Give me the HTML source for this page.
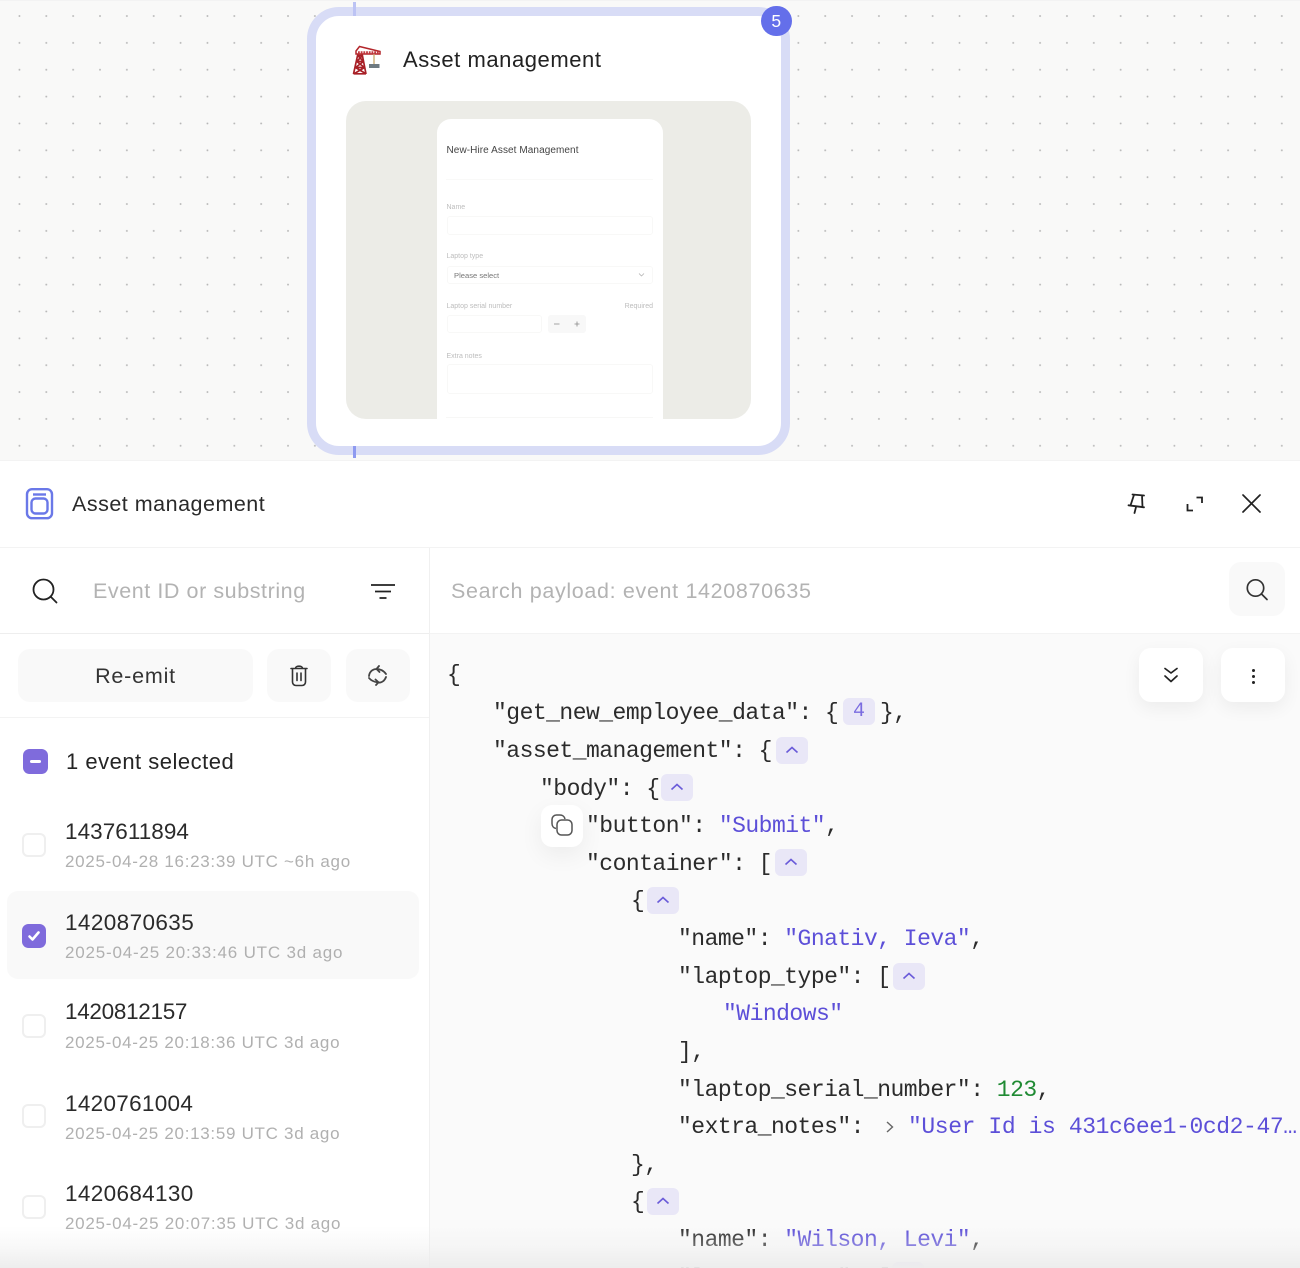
<!DOCTYPE html>
<html><head><meta charset="utf-8"><style>
html,body{margin:0;padding:0;width:1300px;height:1268px;overflow:hidden;background:#fff}
*{box-sizing:border-box}
.a{position:absolute}
#p{position:relative;width:1300px;height:1268px;overflow:hidden;font-family:"Liberation Sans",sans-serif;color:#222}
.t{position:absolute;white-space:nowrap}
.m{position:absolute;white-space:pre;font-family:"Liberation Mono",monospace;font-size:23px;letter-spacing:-.52px;line-height:30px;color:#2b2b2b;margin-top:.5px}
.s{color:#5c4fd8}.n{color:#1f8a33}
.pill{position:absolute;width:32px;height:27px;border-radius:6px;background:#e9e7f7}
.pill svg{position:absolute;left:8px;top:7px}
.lab{position:absolute;white-space:nowrap;font-size:7px;line-height:8px;color:#bdbdbd;margin-top:1.5px}
.inp{position:absolute;border:1px solid #f8f8f7;border-radius:3px}
.id{position:absolute;left:65px;white-space:nowrap;font-size:22.5px;line-height:28px;color:#2a2a2a;letter-spacing:.3px}
.sub{position:absolute;left:65px;white-space:nowrap;font-size:17px;line-height:22px;color:#b0b0b0;letter-spacing:.7px}
.cb{position:absolute;left:22px;width:24px;height:24px;border:2px solid #efefef;border-radius:6px;background:#fff}
.btn{position:absolute;background:#f9f9f9;border-radius:12px}
.fl{position:absolute;background:#fff;border-radius:12px;box-shadow:0 6px 18px rgba(0,0,0,.06)}
</style></head><body><div id="p">

<!-- canvas -->
<div class="a" style="left:0;top:0;width:1300px;height:460px;background-color:#f9f9f8;background-image:radial-gradient(circle,#b4b4b4 0,#b4b4b4 .6px,transparent 1.2px);background-size:26.87px 26.87px;background-position:6px 2.6px"></div>
<div class="a" style="left:0;top:0;width:1300px;height:1px;background:#f3f3f3"></div>

<div class="a" style="left:306.5px;top:7px;width:483.5px;height:448px;border:9.5px solid #d8dcf6;border-radius:32px;background:#fff"></div>
<div class="a" style="left:353px;top:2px;width:3px;height:14px;background:#bcc3f4"></div>
<div class="a" style="left:353px;top:446px;width:3px;height:12px;background:#8e9af0"></div>
<div class="a" style="left:761px;top:5.5px;width:30.5px;height:30.5px;border-radius:50%;background:#646fea;color:#fff;font-size:17.5px;line-height:30.5px;text-align:center">5</div>

<!-- crane -->
<svg class="a" style="left:350px;top:44px" width="34" height="32" viewBox="0 0 34 32" fill="none">
<path d="M3.5 30 L8 9.500 H12 L16 30 M3.500 29.800H16 M5.500 23.500H14.500 M6.800 17.500H13.500 M7.800 11.500H12.500 M5.500 23.500L13.500 17.500 M6.800 17.500L14.500 23.500 M4.500 29.500L14.500 23.500 M5.500 23.500L15.500 29.500 M7.800 11.500L13.500 17.500 M12.500 11.500L6.800 17.500" stroke="#a81f26" stroke-width="1.7"/>
<path d="M6 7L9.500 2.500L30 7.500V10H6Z" fill="#fff" stroke="#b3262b" stroke-width="1.500"/>
<path d="M8 8.500H30" stroke="#c23a40" stroke-width="2.500" stroke-dasharray="1.800 .9"/>
<path d="M24 10V20" stroke="#c9a96b" stroke-width="1.300"/>
<rect x="19" y="20" width="10.500" height="4" fill="#6f7a80"/>
</svg>
<div class="t" style="left:403px;top:45px;font-size:22px;line-height:30px;letter-spacing:.56px;color:#222">Asset management</div>

<!-- preview -->
<div class="a" style="left:346px;top:100.5px;width:404.5px;height:318.5px;border-radius:20px;background:#ecece7;overflow:hidden">
 <div class="a" style="left:90.5px;top:18px;width:226.5px;height:320px;background:#fff;border-radius:14px 14px 0 0"></div>
</div>
<div class="t" style="left:446.5px;top:144.5px;font-size:10px;line-height:12px;color:#444;letter-spacing:.08px">New-Hire Asset Management</div>
<div class="a" style="left:446px;top:179px;width:207px;height:1px;background:#f9f9f8"></div>
<div class="lab" style="left:446.5px;top:202.5px">Name</div>
<div class="inp" style="left:446.5px;top:215.5px;width:206.5px;height:19px"></div>
<div class="lab" style="left:446.5px;top:251.5px">Laptop type</div>
<div class="inp" style="left:446.5px;top:266px;width:206.5px;height:18px"></div>
<div class="t" style="left:454px;top:271px;font-size:7.6px;line-height:9px;color:#777">Please select</div>
<svg class="a" style="left:638px;top:272px" width="7" height="6" fill="none"><path d="M1 1.5L3.5 4L6 1.5" stroke="#aaa" stroke-width=".7"/></svg>
<div class="lab" style="left:446.5px;top:301px">Laptop serial number</div>
<div class="lab" style="right:647px;top:301px">Required</div>
<div class="inp" style="left:446.5px;top:315px;width:95px;height:18px"></div>
<div class="a" style="left:548px;top:315px;width:38px;height:18px;border-radius:3px;background:#f8f8f8"></div>
<svg class="a" style="left:552px;top:320px" width="30" height="8" fill="none"><path d="M2 4H7.500M22.500 4H27.500M25 1.500V6.500" stroke="#888" stroke-width=".8"/></svg>
<div class="lab" style="left:446.5px;top:351px">Extra notes</div>
<div class="inp" style="left:446.5px;top:364px;width:206.5px;height:30px"></div>
<div class="a" style="left:446px;top:416.5px;width:207px;height:1px;background:#f7f7f6"></div>

<!-- panel -->
<div class="a" style="left:0;top:460px;width:1300px;height:808px;background:#fff;border-top:1px solid #f3f3f3"></div>
<div class="a" style="left:0;top:547px;width:1300px;height:1px;background:#f3f3f3"></div>
<div class="a" style="left:429px;top:548px;width:1px;height:720px;background:#f0f0f0"></div>
<div class="a" style="left:0;top:632.5px;width:429px;height:1px;background:#eeeeee"></div>
<div class="a" style="left:0;top:716.5px;width:429px;height:1px;background:#f3f3f3"></div>
<div class="a" style="left:430px;top:633px;width:870px;height:635px;background:#fafafa;border-top:1px solid #f3f3f3"></div>

<svg class="a" style="left:25px;top:487px" width="29" height="34" viewBox="0 0 29 34" fill="none" stroke="#6a78e8" stroke-width="2.4">
<rect x="2" y="2.200" width="25" height="29" rx="5"/><rect x="6.500" y="11.500" width="16" height="15" rx="4"/><path d="M8 7.500H21"/></svg>
<div class="t" style="left:72px;top:489px;font-size:21.5px;line-height:30px;letter-spacing:.5px;color:#2a2a2a">Asset management</div>

<svg class="a" style="left:1126px;top:491px" width="24" height="26" viewBox="0 0 24 26" fill="none" stroke="#222" stroke-width="1.8" stroke-linecap="round" stroke-linejoin="round">
<path d="M6.500 3.500L18 4.500M8 3.800L4.500 14.500L16.500 16L16 4.400M2.500 14.300L18 16.300M10 16L8.500 22"/></svg>
<svg class="a" style="left:1186px;top:495px" width="18" height="18" viewBox="0 0 18 18" fill="none" stroke="#222" stroke-width="1.8">
<path d="M1.500 9V15.500H7M10.500 2.500H16V8"/></svg>
<svg class="a" style="left:1241px;top:493px" width="21" height="21" viewBox="0 0 21 21" fill="none" stroke="#222" stroke-width="1.7" stroke-linecap="round">
<path d="M2 2L19 19M19 2L2 19"/></svg>

<!-- left search -->
<svg class="a" style="left:31px;top:577px" width="28" height="28" viewBox="0 0 28 28" fill="none" stroke="#222" stroke-width="1.800" stroke-linecap="round">
<circle cx="12.500" cy="12.500" r="10"/><path d="M20 20L25.500 25.500"/></svg>
<div class="t" style="left:93px;top:576px;font-size:21.5px;line-height:30px;color:#b3b3b3;letter-spacing:.57px">Event ID or substring</div>
<svg class="a" style="left:370px;top:583px" width="26" height="17" viewBox="0 0 26 17" fill="none" stroke="#222" stroke-width="1.700">
<path d="M1 2H25M5 8.500H21M9.500 15H16.500"/></svg>

<div class="t" style="left:451px;top:576px;font-size:21.5px;line-height:30px;color:#b3b3b3;letter-spacing:.66px">Search payload: event 1420870635</div>
<div class="btn" style="left:1229px;top:562px;width:56px;height:54px"></div>
<svg class="a" style="left:1245px;top:578px" width="24" height="24" viewBox="0 0 24 24" fill="none" stroke="#333" stroke-width="1.700" stroke-linecap="round">
<circle cx="10.500" cy="10" r="8.200"/><path d="M16.500 16L22 21.500"/></svg>

<!-- actions -->
<div class="btn" style="left:18px;top:649px;width:235px;height:53px;color:#333;font-size:21.500px;line-height:55px;text-align:center;letter-spacing:.8px">Re-emit</div>
<div class="btn" style="left:267px;top:649px;width:64px;height:53px"></div>
<svg class="a" style="left:289px;top:664px" width="20" height="23" viewBox="0 0 20 23" fill="none" stroke="#333" stroke-width="1.600" stroke-linecap="round" stroke-linejoin="round">
<path d="M2 4.500H18M6.500 4.200C6.500 1.500 13.500 1.500 13.500 4.200M3.500 4.500V18C3.500 20 5 21.500 7 21.500H13C15 21.500 16.500 20 16.500 18V4.500M8 9V16.500M12 9V16.500"/></svg>
<div class="btn" style="left:346px;top:649px;width:64px;height:53px"></div>
<svg class="a" style="left:367px;top:665px" width="21" height="21" viewBox="0 0 21 21" fill="none" stroke="#444" stroke-width="1.800" stroke-linecap="round" stroke-linejoin="round">
<path d="M2 11C2.500 6.500 6 3.800 10 4C13.500 4.200 16.800 6 19 9M12 1L9.500 4L12.500 7M19 12C17.500 16 14.500 18 11 17.500C7.500 17 4 15.500 2 13M9 20L11.500 17.300L8.500 14.500"/></svg>

<!-- event list -->
<div class="a" style="left:23px;top:749px;width:25px;height:25px;border-radius:6.500px;background:#7f6bdc"></div>
<div class="a" style="left:30px;top:760px;width:11px;height:3px;border-radius:1.500px;background:#fff"></div>
<div class="t" style="left:66px;top:747px;font-size:22px;line-height:30px;letter-spacing:.5px;color:#242424">1 event selected</div>

<div class="cb" style="top:833px"></div>
<div class="id" style="top:818px;letter-spacing:.05px">1437611894</div>
<div class="sub" style="top:851px">2025-04-28 16:23:39 UTC ~6h ago</div>

<div class="a" style="left:7px;top:891px;width:412px;height:88px;border-radius:11px;background:#f9f9f9"></div>
<div class="a" style="left:22px;top:924px;width:24px;height:24px;border-radius:6.500px;background:#7f6bdc"></div>
<svg class="a" style="left:27px;top:929px" width="14" height="14" fill="none"><path d="M2.500 7.500L5.500 10.500L11.500 3.500" stroke="#fff" stroke-width="2.600" stroke-linecap="round" stroke-linejoin="round"/></svg>
<div class="id" style="top:909px;letter-spacing:.4px">1420870635</div>
<div class="sub" style="top:942px;letter-spacing:.8px">2025-04-25 20:33:46 UTC 3d ago</div>

<div class="cb" style="top:1014px"></div>
<div class="id" style="top:998px;letter-spacing:-.3px">1420812157</div>
<div class="sub" style="top:1032px">2025-04-25 20:18:36 UTC 3d ago</div>

<div class="cb" style="top:1104px"></div>
<div class="id" style="top:1090px;letter-spacing:.3px">1420761004</div>
<div class="sub" style="top:1123px">2025-04-25 20:13:59 UTC 3d ago</div>

<div class="cb" style="top:1195px"></div>
<div class="id" style="top:1180px;letter-spacing:.35px">1420684130</div>
<div class="sub" style="top:1213px;letter-spacing:.73px">2025-04-25 20:07:35 UTC 3d ago</div>

<!-- json -->
<div class="m" style="left:447px;top:659px">{</div>
<div class="m" style="left:493px;top:697px">"get_new_employee_data": {</div>
<div class="pill" style="left:843px;top:698px;color:#7a6ce0;font:20px/27px 'Liberation Mono',monospace;text-align:center">4</div>
<div class="m" style="left:880px;top:697px">},</div>
<div class="m" style="left:493px;top:735px">"asset_management": {</div>
<div class="pill" style="left:776px;top:737px"><svg width="16" height="12" fill="none"><path d="M2.500 8.500L8 3.500L13.500 8.500" stroke="#6a5bd9" stroke-width="1.600"/></svg></div>
<div class="m" style="left:540px;top:773px">"body": {</div>
<div class="pill" style="left:661px;top:774px"><svg width="16" height="12" fill="none"><path d="M2.500 8.500L8 3.500L13.500 8.500" stroke="#6a5bd9" stroke-width="1.600"/></svg></div>
<div class="fl" style="left:541px;top:805px;width:42px;height:42px;border-radius:11px;box-shadow:0 8px 24px rgba(0,0,0,.06)"></div>
<svg class="a" style="left:550px;top:813px" width="24" height="24" viewBox="0 0 24 24" fill="none" stroke="#555" stroke-width="1.500">
<path d="M6 15.500C3.500 15 2 13 2 10.500V6.500C2 4 4 2 6.500 2H10C12.500 2 14.500 3.500 15 6"/><rect x="7" y="7" width="15" height="15" rx="4.500"/></svg>
<div class="m" style="left:586px;top:810px">"button": <span class="s">"Submit"</span>,</div>
<div class="m" style="left:586px;top:848px">"container": [</div>
<div class="pill" style="left:775px;top:849px"><svg width="16" height="12" fill="none"><path d="M2.500 8.500L8 3.500L13.500 8.500" stroke="#6a5bd9" stroke-width="1.600"/></svg></div>
<div class="m" style="left:631px;top:885px">{</div>
<div class="pill" style="left:647px;top:887px"><svg width="16" height="12" fill="none"><path d="M2.500 8.500L8 3.500L13.500 8.500" stroke="#6a5bd9" stroke-width="1.600"/></svg></div>
<div class="m" style="left:678px;top:923px">"name": <span class="s">"Gnativ, Ieva"</span>,</div>
<div class="m" style="left:678px;top:961px">"laptop_type": [</div>
<div class="pill" style="left:893px;top:963px"><svg width="16" height="12" fill="none"><path d="M2.500 8.500L8 3.500L13.500 8.500" stroke="#6a5bd9" stroke-width="1.600"/></svg></div>
<div class="m" style="left:723px;top:998px"><span class="s">"Windows"</span></div>
<div class="m" style="left:678px;top:1036px">],</div>
<div class="m" style="left:678px;top:1074px">"laptop_serial_number": <span class="n">123</span>,</div>
<div class="m" style="left:678px;top:1111px">"extra_notes":</div>
<svg class="a" style="left:884px;top:1120px" width="12" height="14" fill="none"><path d="M3 2L8.500 7L3 12" stroke="#666" stroke-width="1.400"/></svg>
<div class="m" style="left:908px;top:1111px;letter-spacing:-.4px"><span class="s">"User Id is 431c6ee1-0cd2-47…</span></div>
<div class="m" style="left:631px;top:1149px">},</div>
<div class="m" style="left:631px;top:1186px">{</div>
<div class="pill" style="left:647px;top:1188px"><svg width="16" height="12" fill="none"><path d="M2.500 8.500L8 3.500L13.500 8.500" stroke="#6a5bd9" stroke-width="1.600"/></svg></div>
<div class="m" style="left:678px;top:1224px">"name": <span class="s">"Wilson, Levi"</span>,</div>
<div class="m" style="left:678px;top:1262px">"laptop_type": [</div>
<div class="pill" style="left:892px;top:1262px"></div>

<div class="fl" style="left:1139px;top:648px;width:64px;height:54px"></div>
<svg class="a" style="left:1162px;top:666px" width="18" height="18" viewBox="0 0 18 18" fill="none" stroke="#222" stroke-width="1.700" stroke-linecap="round" stroke-linejoin="round">
<path d="M3 2.500L9 7L15 2.500M3 10L9 15.500L15 10"/></svg>
<div class="fl" style="left:1221px;top:648px;width:64px;height:54px"></div>
<div class="a" style="left:1251.500px;top:668.500px;width:3px;height:3px;border-radius:50%;background:#222;box-shadow:0 6px 0 #222,0 12px 0 #222"></div>

<div class="a" style="left:0;top:1226px;width:1300px;height:42px;background:linear-gradient(rgba(236,236,236,0) 0,rgba(236,236,236,.35) 50%,rgba(236,236,236,.95) 100%)"></div>
</div></body></html>
